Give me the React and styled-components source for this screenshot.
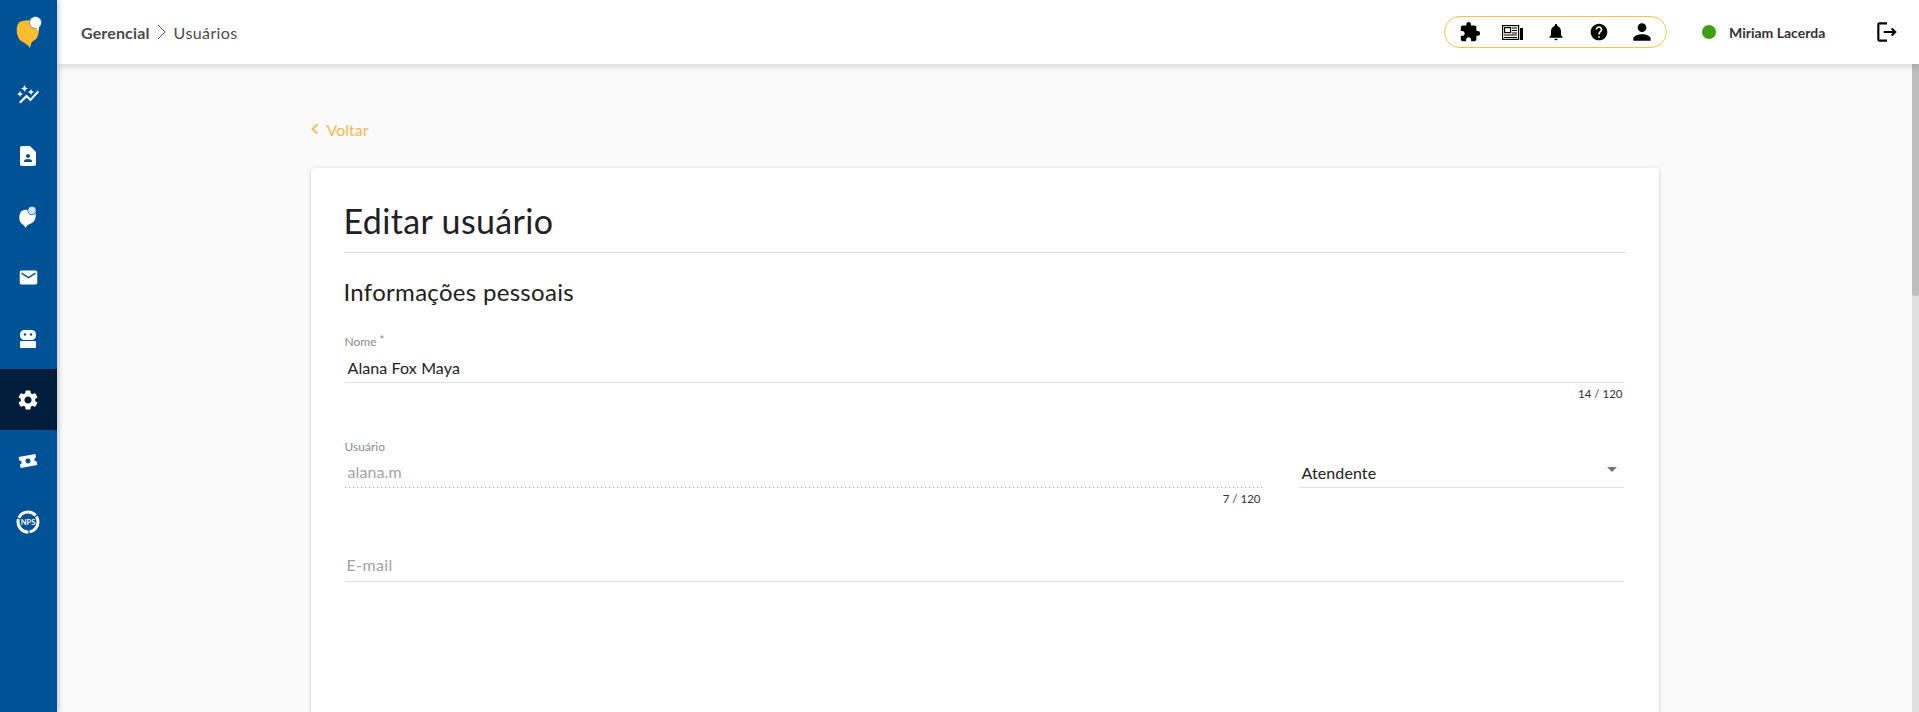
import React from 'react'
import styled, { createGlobalStyle } from 'styled-components'
import {
  MdAutoGraph, MdContactPage, MdEmail, MdSettings, MdExtension,
  MdNotifications, MdHelp, MdPerson, MdOutlineLogout, MdArrowDropDown, MdChevronLeft,
} from 'react-icons/md'

const GlobalStyle = createGlobalStyle`
  html, body { margin: 0; height: 100%; overflow: hidden; }
  body { font-family: Lato, "Noto Sans", sans-serif; background: #fafafa; }
  * { box-sizing: border-box; }
`

const Layout = styled.div`
  display: flex;
  height: 100vh;
`

const Sidebar = styled.nav`
  position: relative;
  z-index: 3;
  flex: 0 0 57px;
  background: #005296;
  box-shadow: 2px 0 5px rgba(0, 0, 0, 0.2);
`

const LogoBox = styled.div`
  height: 64px;
  display: flex;
  align-items: center;
  justify-content: center;
`

const NavItem = styled.div`
  height: 61px;
  display: flex;
  align-items: center;
  justify-content: center;
  padding-right: 1px;
  color: #fff;
  font-size: ${p => p.$size || 24}px;
  background: ${p => (p.$active ? '#001e3c' : 'transparent')};
`

const Main = styled.div`
  flex: 1;
  min-width: 0;
  display: flex;
  flex-direction: column;
`

const Header = styled.header`
  position: relative;
  z-index: 2;
  flex: 0 0 64px;
  display: flex;
  align-items: center;
  background: #fff;
  padding: 0 19px 0 24px;
  box-shadow: 0 2px 8px rgba(0, 0, 0, 0.16);
`

const Breadcrumb = styled.div`
  display: flex;
  align-items: center;
  gap: 7.5px;
  font-size: 16px;
  color: #4a4a4a;
`

const Crumb = styled.span`
  font-weight: ${p => (p.$bold ? 700 : 400)};
  letter-spacing: ${p => (p.$bold ? 0.15 : 0.4)}px;
`

const HeaderRight = styled.div`
  margin-left: auto;
  display: flex;
  align-items: center;
`

const IconPill = styled.div`
  width: 223px;
  height: 32px;
  border: 1px solid #fbc146;
  border-radius: 16px;
  display: grid;
  grid-template-columns: repeat(5, 43px);
  justify-content: center;
  align-items: center;
  justify-items: center;
  color: #000;
  svg { display: block; }
`

const StatusDot = styled.span`
  width: 14px;
  height: 14px;
  border-radius: 50%;
  background: #3f9e10;
  margin-left: 35px;
`

const UserName = styled.span`
  margin-left: 13px;
  width: 145px;
  font-size: 14px;
  font-weight: 700;
  color: #333;
`

const LogoutIcon = styled(MdOutlineLogout)`
  display: block;
  font-size: 26px;
  color: #000;
`

const Body = styled.div`
  flex: 1;
  min-height: 0;
  display: flex;
`

const Content = styled.main`
  flex: 1;
  min-width: 0;
  overflow: hidden;
  padding-top: 55px;
`

const Column = styled.div`
  width: 1348px;
  margin: 0 auto;
`

const BackLink = styled.a`
  display: flex;
  align-items: center;
  height: 20px;
  color: #ffb74d;
  font-size: 16px;
  svg { font-size: 22px; margin: 0 1px 0 -7px; }
`

const Card = styled.section`
  margin-top: 29px;
  height: 800px;
  padding: 33px 33px 0;
  background: #fff;
  border-radius: 4px;
  box-shadow: 0 1px 4px rgba(0, 0, 0, 0.2);
`

const Title = styled.h1`
  margin: 0;
  height: 52px;
  font-size: 34px;
  line-height: 40px;
  font-weight: 400;
  letter-spacing: 0.36px;
  color: #212121;
  border-bottom: 1px solid #e0e0e0;
`

const SectionTitle = styled.h2`
  margin: 24px 0 0;
  font-size: 24px;
  line-height: 30px;
  font-weight: 400;
  letter-spacing: 0.3px;
  color: #212121;
`

const FieldRow = styled.div`
  display: flex;
  gap: 37px;
  margin-top: ${p => p.$top}px;
  padding: 0 2px 0 1px;
`

const Field = styled.div`
  flex: ${p => (p.$width ? `0 0 ${p.$width}px` : 1)};
  min-width: 0;
`

const Label = styled.div`
  height: 14px;
  font-size: 12px;
  line-height: 14px;
  color: #8a8a8a;
  sup { font-size: 11px; line-height: 0; vertical-align: 2px; }
`

const Value = styled.div`
  display: flex;
  align-items: center;
  justify-content: space-between;
  height: 34px;
  padding: 3px 3px 0;
  font-size: 16px;
  letter-spacing: 0.1px;
  color: ${p => (p.$muted ? '#a3a3a3' : '#212121')};
  border-bottom: 1px solid #e0e0e0;
  svg { font-size: 24px; color: #757575; margin: -6px -3px 0 0; }
`

// empty field: the placeholder sits a little higher and further left
const PlaceholderValue = styled(Value)`
  padding: 0 2px;
  letter-spacing: 0.35px;
`

// the dotted line of a disabled field has wider gaps than a dotted border gives
const DisabledValue = styled(Value)`
  padding-top: 1px;
  border-bottom: 0;
  background: linear-gradient(to right, #9e9e9e 30%, transparent 0) left bottom / 4px 1px repeat-x;
`

const Counter = styled.div`
  margin-top: 4px;
  padding-right: 1px;
  text-align: right;
  font-size: 11.5px;
  line-height: 14px;
  color: #333;
`

const ScrollTrack = styled.div`
  flex: 0 0 7px;
  background: #e0e0e0;
`

const ScrollThumb = styled.div`
  height: 232px;
  border-radius: 0 0 3px 3px;
  background: #bdbdbd;
`

const Logo = () => (
  <svg width="30" height="34" viewBox="0 0 30 34">
    <path d="M9 6 C14 4.500 22 5 24.500 8 C26 14 25 24 19 26 C18 27 17 28 16 33 C14 30 11 28 7 26 C2 22 2 12 4 9 C5 7 7 6 9 6Z" fill="#fbbc2f" />
    <circle cx="21.500" cy="7.500" r="6" fill="#fff" stroke="#005296" strokeWidth="0.500" />
    <path d="M21 12 L25 11.500 L24.500 15.500Z" fill="#fff" />
  </svg>
)

const BubbleIcon = () => (
  <svg width="24" height="24" viewBox="0 0 24 24">
    <path d="M8 5 C13 4 18 5 19.500 8 C20.500 13 18.500 17 15 18.500 L11.500 20 L9.500 23 C9 21 7 19.500 5 18 C2.800 15.500 3 10 4.200 8 C5 6 6 5.500 8 5Z" fill="#fff" />
    <circle cx="16" cy="5.500" r="4.200" fill="#d5e4f0" stroke="#005296" strokeWidth="0.800" />
  </svg>
)

const RobotIcon = () => (
  <svg width="24" height="24" viewBox="0 0 24 24" fill="#fff">
    <rect x="4" y="3" width="16" height="10" rx="4.500" />
    <rect x="4" y="14" width="16" height="7" rx="1" />
    <circle cx="9" cy="7.500" r="1.200" fill="#005296" />
    <circle cx="15" cy="7.500" r="1.200" fill="#005296" />
  </svg>
)

const TicketIcon = () => (
  <svg width="24" height="24" viewBox="0 0 24 24">
    <g transform="rotate(-10 12 12)">
      <path d="M3.500 6.500 H20.500 V10 A2 2 0 0 0 20.500 14 V17.500 H3.500 V14 A2 2 0 0 0 3.500 10Z" fill="#fff" />
      <circle cx="12" cy="12" r="2.500" fill="#005296" />
    </g>
  </svg>
)

const NpsIcon = () => (
  <svg width="26" height="26" viewBox="0 0 26 26">
    <circle cx="13" cy="13" r="10" fill="none" stroke="#fff" strokeWidth="3" strokeDasharray="14 1.200 19 1.200 20 1.200 7" />
    <text x="13" y="15.500" textAnchor="middle" fontSize="7.500" fontWeight="700" fill="#fff" fontFamily="Lato, sans-serif">NPS</text>
  </svg>
)

const NewsIcon = () => (
  <svg width="21" height="15" viewBox="0 0 21 15">
    <rect x="0.600" y="0.600" width="16" height="13.800" fill="none" stroke="#000" strokeWidth="1.200" />
    <rect x="2.600" y="2.600" width="6" height="5" fill="none" stroke="#000" strokeWidth="1.200" />
    <path d="M10 3 H15 M10 5.500 H15 M10 8 H15 M2 10 H15 M2 12.500 H15" stroke="#000" strokeWidth="1.200" />
    <rect x="18" y="3" width="3" height="12" fill="#000" />
  </svg>
)

const Chevron = () => (
  <svg width="9" height="16" viewBox="0 0 9 16">
    <path d="M1 1 L8 8 L1 15" fill="none" stroke="#4a4a4a" strokeWidth="1" />
  </svg>
)

const navItems = [
  { icon: <MdAutoGraph /> },
  { icon: <MdContactPage /> },
  { icon: <BubbleIcon /> },
  { icon: <MdEmail />, size: 21 },
  { icon: <RobotIcon /> },
  { icon: <MdSettings />, active: true },
  { icon: <TicketIcon /> },
  { icon: <NpsIcon /> },
]

export default function App() {
  return (<>
    <GlobalStyle />
    <Layout>
      <Sidebar>
        <LogoBox><Logo /></LogoBox>
        {navItems.map((item, i) => (
          <NavItem key={i} $active={item.active} $size={item.size}>{item.icon}</NavItem>
        ))}
      </Sidebar>
      <Main>
        <Header>
          <Breadcrumb>
            <Crumb $bold>Gerencial</Crumb>
            <Chevron />
            <Crumb>Usuários</Crumb>
          </Breadcrumb>
          <HeaderRight>
            <IconPill>
              <MdExtension size={22} />
              <NewsIcon />
              <MdNotifications size={20} />
              <MdHelp size={20} />
              <MdPerson size={26} />
            </IconPill>
            <StatusDot />
            <UserName>Miriam Lacerda</UserName>
            <LogoutIcon />
          </HeaderRight>
        </Header>
        <Body>
          <Content>
            <Column>
              <BackLink><MdChevronLeft />Voltar</BackLink>
              <Card>
                <Title>Editar usuário</Title>
                <SectionTitle>Informações pessoais</SectionTitle>
                <FieldRow $top={28}>
                  <Field>
                    <Label>Nome <sup>*</sup></Label>
                    <Value>Alana Fox Maya</Value>
                    <Counter>14 / 120</Counter>
                  </Field>
                </FieldRow>
                <FieldRow $top={39}>
                  <Field $width={917}>
                    <Label>Usuário</Label>
                    <DisabledValue $muted>alana.m</DisabledValue>
                    <Counter>7 / 120</Counter>
                  </Field>
                  <Field>
                    <Label />
                    <Value>Atendente<MdArrowDropDown /></Value>
                  </Field>
                </FieldRow>
                <FieldRow $top={28}>
                  <Field>
                    <Label />
                    <PlaceholderValue $muted>E-mail</PlaceholderValue>
                  </Field>
                </FieldRow>
              </Card>
            </Column>
          </Content>
          <ScrollTrack><ScrollThumb /></ScrollTrack>
        </Body>
      </Main>
    </Layout>
  </>)
}
